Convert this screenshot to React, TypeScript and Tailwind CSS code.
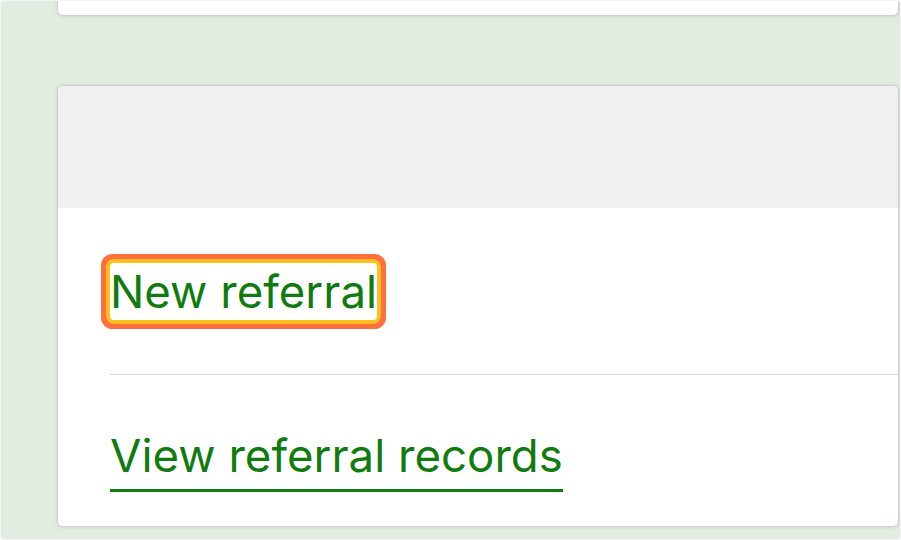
import React from 'react';

const linkFont = { fontFamily: 'Inter, "Noto Sans", Arial, sans-serif' };

const ReferralCard: React.FC = () => {
  return (
    <div className="mt-[69px] rounded-[6px] border border-[#cfcfcf] bg-white shadow-[0_0_4px_rgba(0,0,0,0.12)] overflow-hidden">
      {/* cabecera gris vacía */}
      <div className="h-[122px] bg-[#f0f0f0]" />

      <div className="pl-[52px] pt-[55px] pb-[34px]">
        <a
          href="#"
          style={linkFont}
          className="inline-block bg-white text-[45.6px] leading-[57px] text-[#107c10] rounded-[4px] shadow-[0_0_0_4px_#ffbf1f,0_0_0_9px_#ff6f3d] no-underline"
        >
          New referral
        </a>

        <div className="mt-[54px] h-px bg-[#d9d9d9]" />

        <a
          href="#"
          style={linkFont}
          className="mt-[52px] inline-block text-[45.6px] leading-[57px] text-[#107c10] pb-[5px] border-b-[3px] border-[#107c10]"
        >
          View referral records
        </a>
      </div>
    </div>
  );
};

const App: React.FC = () => {
  return (
    <div className="w-[901px] h-[540px] overflow-hidden bg-[#e2ece1] border border-[#f4f4f7] rounded-[4px]">
      <div className="pl-[56px] pr-[1px]">
        {/* tarjeta superior, cortada por el borde */}
        <div className="h-[15px] rounded-b-[6px] border border-t-0 border-[#cfcfcf] bg-white shadow-[0_0_4px_rgba(0,0,0,0.12)]" />
        <ReferralCard />
      </div>
    </div>
  );
};

export default App;
